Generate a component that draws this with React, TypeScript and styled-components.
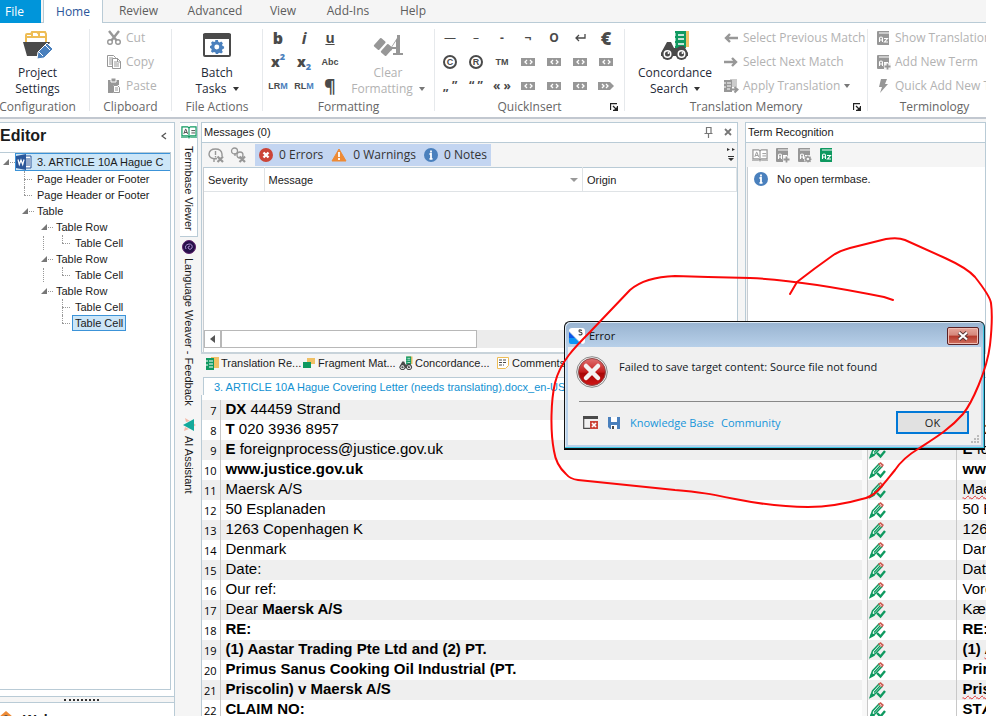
import React from "react";
import styled, { createGlobalStyle, css } from "styled-components";

const ui = `"Open Sans", "Noto Sans", sans-serif`;
const plain = `"Liberation Sans", Arial, sans-serif`;
const line = "#b9cbd6";
const ink = "#4a4a4a";
const faded = "#979797";
const green = "#0f9960";
const blue = "#4a80bd";

const Global = createGlobalStyle`
  * { box-sizing: border-box; }
  body { margin: 0; background: #fff; overflow: hidden; }
  button { font: inherit; color: inherit; background: none; border: 0; padding: 0; margin: 0; text-align: inherit; white-space: nowrap; }
  svg { display: block; flex: none; }
  ul { list-style: none; margin: 0; padding: 0; }
`;

const Page = styled.div`
  position: relative;
  height: 100vh;
  padding-right: 7px;
  overflow: hidden;
  font: 11px/16px ${plain};
  color: #1b1b1b;
`;
const AppWindow = styled.div`
  display: flex;
  flex-direction: column;
  height: 100%;
  overflow: hidden;
  background: #f5f5f5;
`;

/* ---------- ribbon ---------- */
const TabBar = styled.nav`
  display: flex;
  height: 23px;
  flex: none;
  font: 12px/22px ${ui};
  color: #5d5d5d;
  border-bottom: 1px solid ${line};
`;
const FileTab = styled.button`
  width: 41px;
  height: 23px;
  padding-left: 5px;
  margin-right: 2px;
  color: #fff;
  background: #0095da;
`;
const Tab = styled.button<{ $w: number; $active?: boolean }>`
  width: ${(p) => p.$w}px;
  text-align: center;
  ${(p) =>
    p.$active &&
    css`
      height: 23px;
      color: #2a5599;
      background: #fff;
      border: 1px solid ${line};
      border-width: 0 1px;
    `}
`;
const Ribbon = styled.div`
  display: flex;
  flex: none;
  height: 96px;
  margin-bottom: 3px;
  background: #fff;
  border-bottom: 2px solid #c2c8d0;
  font: 12px/16px ${ui};
  overflow: hidden;
`;
const Group = styled.section<{ $w: number }>`
  display: flex;
  flex-direction: column;
  flex: none;
  width: ${(p) => p.$w}px;
  margin: 6px 0;
  border-right: 1px solid #e6e9ec;
`;
const GroupBody = styled.div<{ $pad?: number; $gap?: number }>`
  display: flex;
  flex: none;
  height: 70px;
  padding-left: ${(p) => p.$pad || 0}px;
  gap: ${(p) => p.$gap || 0}px;
`;
const GroupLabel = styled.div<{ $left?: boolean }>`
  display: flex;
  flex: none;
  justify-content: center;
  padding-right: ${(p) => (p.$left ? 14 : 0)}px;
  line-height: 16px;
  color: #666;
  position: relative;
`;
const Launcher = styled.button`
  position: absolute;
  right: 6px;
  top: 4px;
`;
const Large = styled.button<{ $w: number; $off?: boolean }>`
  display: flex;
  flex-direction: column;
  align-items: center;
  width: ${(p) => p.$w}px;
  color: ${(p) => (p.$off ? "#b2b2b2" : "#1f2a38")};
  line-height: 16px;
  text-align: center;
`;
const LargeIcon = styled.span`
  display: flex;
  align-items: center;
  height: 36px;
  padding-bottom: 4px;
`;
const WithArrow = styled.span`
  display: inline-flex;
  align-items: center;
  gap: 6px;
`;
const SmallList = styled.div`
  display: flex;
  flex-direction: column;
`;
const Small = styled.button`
  display: flex;
  align-items: center;
  flex: none;
  gap: 4px;
  height: 24px;
  padding-bottom: 7px;
  color: #b2b2b2;
`;
const IconGrid = styled.div<{ $cols: number }>`
  display: grid;
  grid-template-columns: repeat(${(p) => p.$cols}, 26px);
  grid-auto-rows: 24px;
`;
const Cell = styled.button<{ $s?: number; $b?: number }>`
  display: flex;
  align-items: center;
  justify-content: center;
  height: 18px;
  color: ${ink};
  font-size: ${(p) => p.$s || 12}px;
  font-weight: ${(p) => p.$b || 700};
  line-height: 16px;
  sup, sub { font-size: 9px; line-height: 8px; color: ${blue}; }
  sup { align-self: flex-start; }
  sub { align-self: flex-end; }
`;
const Tight = styled.span`
  font: bold 9px/16px ${plain};
  em { font-style: normal; color: ${blue}; }
`;
const Ring = styled.span`
  width: 14px;
  height: 14px;
  border: 2px solid ${ink};
  border-radius: 50%;
  font: bold 9px/10px ${plain};
  text-align: center;
`;

/* ---------- workspace ---------- */
const Work = styled.div`
  display: flex;
  flex: 1;
  min-height: 0;
`;
const Side = styled.aside`
  display: flex;
  flex-direction: column;
  width: 175px;
  flex: none;
  border-right: 1px solid ${line};
`;
const SidePanel = styled.div`
  display: flex;
  flex-direction: column;
  flex: 1;
  min-height: 0;
  background: #fff;
  border-top: 1px solid ${line};
  border-bottom: 1px solid ${line};
`;
const SideTitle = styled.header`
  display: flex;
  align-items: center;
  justify-content: space-between;
  height: 29px;
  padding: 0 7px 3px 0;
  font: bold 16px/20px ${plain};
`;
const Tree = styled.div`
  flex: 1;
  margin: 0 3px 6px 0;
  border: 1px solid ${line};
  border-left: 0;
  overflow: hidden;
`;
const Node = styled.li<{ $x: number; $root?: boolean }>`
  display: flex;
  align-items: center;
  height: ${(p) => (p.$root ? 18 : 16)}px;
  padding-left: ${(p) => p.$x}px;
  white-space: nowrap;
`;
const NodeText = styled.span<{ $sel?: boolean }>`
  line-height: 14px;
  padding: 0 2px;
  border: 1px solid transparent;
  ${(p) =>
    p.$sel &&
    css`
      background: #cce6f8;
      border-color: #3c93d8;
    `}
`;
const RootText = styled.span`
  display: flex;
  align-items: center;
  gap: 5px;
  flex: 1;
  height: 18px;
  padding-bottom: 1px;
  background: #cce6f8;
  border: 1px solid #3c93d8;
  border-right: 0;
`;
const Guide = styled.span<{ $tail?: boolean }>`
  position: relative;
  width: 8px;
  height: 16px;
  margin-right: 2px;
  &::before {
    content: "";
    position: absolute;
    inset: 8px 0 0 0;
    border-top: 1px dotted #999;
  }
  &::after {
    content: "";
    position: absolute;
    inset: 0 0 ${(p) => (p.$tail ? 0 : 8)}px 0;
    border-left: 1px dotted #999;
  }
`;
const OuterGuide = styled.span`
  width: 19px;
  height: 14px;
  border-left: 1px dotted #999;
`;
const Dots = styled.span`
  width: 5px;
  margin: 0 0 0 1px;
  border-top: 1px dotted #999;
`;
const Splitter = styled.div`
  display: flex;
  justify-content: center;
  align-items: center;
  height: 5px;
  padding-right: 11px;
`;
const Grip = styled.span`
  width: 35px;
  border-top: 2px dotted #333;
`;
const SideFoot = styled.div`
  display: flex;
  gap: 10px;
  height: 14px;
  overflow: hidden;
  padding-top: 8px;
  background: #fff;
  border-top: 1px solid ${line};
  font: bold 14px/18px ${plain};
`;

const Rail = styled.div`
  display: flex;
  flex-direction: column;
  width: 26px;
  flex: none;
  padding: 0 2px 0 5px;
`;
const RailTab = styled.button<{ $h: number; $active?: boolean }>`
  display: flex;
  flex-direction: column;
  align-items: center;
  width: 18px;
  height: ${(p) => p.$h}px;
  padding-top: ${(p) => (p.$active ? 2 : 3)}px;
  gap: ${(p) => (p.$active ? 7 : 4)}px;
  ${(p) =>
    p.$active &&
    css`
      background: #fff;
      border: 1px solid ${line};
      border-left: 0;
    `}
`;
const Vert = styled.span`
  writing-mode: vertical-rl;
  line-height: 16px;
`;

const Main = styled.div`
  display: flex;
  flex-direction: column;
  flex: 1;
  min-width: 0;
`;
const Docks = styled.div`
  display: flex;
  height: 230px;
  gap: 7px;
  flex: none;
`;
const Dock = styled.section<{ $w?: number }>`
  display: flex;
  flex-direction: column;
  ${(p) => (p.$w ? `width: ${p.$w}px; flex: none;` : "flex: 1;")}
  min-width: 0;
  border: 1px solid ${line};
  border-bottom: 0;
`;
const DockTitle = styled.header`
  display: flex;
  align-items: center;
  height: 20px;
  padding: 0 5px 1px 2px;
  gap: 11px;
  background: #fff;
  border-bottom: 1px solid ${line};
  h2 { flex: 1; margin: 0; font: inherit; line-height: 18px; }
`;
const DockTools = styled.div`
  display: flex;
  align-items: center;
  gap: 6px;
  height: 24px;
  padding: 0 2px 0 6px;
`;
const Filters = styled.div`
  display: flex;
  align-items: center;
  gap: 8px;
  height: 22px;
  padding: 0 4px;
  margin: 0 auto 0 3px;
  background: #c3d5f1;
  font: 12px/16px ${ui};
  color: #333;
  button { display: flex; align-items: center; gap: 6px; }
`;
const Canvas = styled.div`
  display: flex;
  flex-direction: column;
  flex: 1;
  margin-left: 1px;
  background: #fff;
  border-left: 1px solid #c8cdd2;
`;
const MsgTable = styled.table`
  width: 100%;
  border-collapse: collapse;
  table-layout: fixed;
  border-top: 1px solid ${line};
  th {
    height: 24px;
    padding: 0 4px;
    text-align: left;
    font-weight: 400;
    border-bottom: 1px solid #dfe3e6;
    border-right: 1px solid #dfe3e6;
  }
`;
const SortHead = styled.span`
  display: flex;
  align-items: center;
  justify-content: space-between;
`;
const Scroll = styled.div`
  display: flex;
  height: 18px;
  margin: auto 0 4px;
  background: #ececec;
`;
const ScrollArrow = styled.button`
  display: flex;
  align-items: center;
  justify-content: center;
  width: 17px;
  background: #fff;
  border: 1px solid #b8b8b8;
`;
const ScrollThumb = styled.span`
  width: 48%;
  background: #fff;
  border: 1px solid #b8b8b8;
`;
const Empty = styled.p`
  display: flex;
  align-items: center;
  gap: 9px;
  margin: 4px 0 0 6px;
`;
const DockTabs = styled.div`
  display: flex;
  align-items: center;
  height: 22px;
  flex: none;
  padding: 0 0 3px 4px;
  border-top: 2px solid #c8d3da;
`;
const DockTab = styled.button`
  display: flex;
  align-items: center;
  gap: 2px;
  width: 97px;
`;
const DocTabs = styled.div`
  display: flex;
  height: 18px;
  flex: none;
  margin: 3px 0 0 2px;
  background: #fff;
  border-top: 1px solid ${line};
  border-left: 1px solid ${line};
`;
const DocTab = styled.button`
  padding-left: 10px;
  color: #1191d2;
`;
const Sheet = styled.div`
  flex: 1;
  min-height: 0;
  overflow: hidden;
  padding-top: 5px;
  background: #fff;
  border-left: 1px solid ${line};
`;
const Segments = styled.table`
  width: 100%;
  border-collapse: collapse;
  table-layout: fixed;
  font: 15px/20px ${plain};
  color: #000;
  td, th {
    height: 20px;
    padding: 0;
    overflow: hidden;
    white-space: nowrap;
  }
  tr:nth-child(odd) > * { background: #efefef; }
  tr > td:nth-child(3) { background: #f8f8f8; }
`;
const Num = styled.th`
  text-align: right;
  font: 11px/18px ${ui};
  border-right: 1px solid #c8c8c8;
  && { padding: 2px 3px 0 0; }
`;
const Source = styled.td`
  && { padding-left: 5px; padding-bottom: 2px; line-height: 18px; }
`;
const Status = styled.td`
  border-left: 1px solid #c8c8c8;
  && { padding-left: 1px; }
`;
const Target = styled.td`
  border-left: 1px solid #c8c8c8;
  && { padding-left: 6px; padding-bottom: 2px; line-height: 18px; }
`;
const Wavy = styled.span`
  text-decoration: underline wavy #e03030 1px;
  text-underline-offset: 1px;
`;

/* ---------- error dialog ---------- */
const Dialog = styled.section`
  position: absolute;
  left: 564px;
  top: 321px;
  width: 421px;
  padding: 0 3px 3px;
  border: 1px solid #111;
  border-right-color: #11384a;
  border-radius: 6px 6px 0 0;
  background: linear-gradient(#98b3d0, #b9d1ea 26px);
  box-shadow: inset -1px -1px 0 #3fc8e4, inset 1px 1px 0 #dce9f5, 0 1px 0 #000;
  font: 11px/16px ${ui};
`;
const DialogTitle = styled.header`
  display: flex;
  align-items: center;
  height: 25px;
  gap: 4px;
  padding: 3px 2px 0 1px;
  h2 { flex: 1; margin: 0; font: inherit; color: #111; }
`;
const DialogClose = styled.button`
  display: flex;
  align-items: center;
  justify-content: center;
  width: 32px;
  height: 18px;
  border: 1px solid #5a2226;
  border-radius: 2px;
  background: linear-gradient(#e6a69b 0, #d5877a 45%, #b5382a 50%, #cf7060 100%);
  box-shadow: inset 0 0 0 1px #f0bdb3;
`;
const DialogBody = styled.div`
  background: #f0f0f0;
  padding: 9px 12px 11px 8px;
`;
const DialogText = styled.div`
  display: flex;
  gap: 11px;
  height: 45px;
  color: #10181f;
  p { margin: 3px 0 0; }
`;
const DialogFoot = styled.footer`
  display: flex;
  align-items: center;
  gap: 7px;
  margin-left: 3px;
  padding: 9px 0 0 4px;
  border-top: 1px solid #888;
  a { color: #1595da; text-decoration: none; }
`;
const FootIcon = styled.button`
  margin-right: 3px;
`;
const Ok = styled.button`
  width: 73px;
  height: 23px;
  margin-left: auto;
  text-align: center;
  color: #222;
  border: 2px solid #0078d7;
  background: #e1e1e1;
`;
const Resize = styled.svg`
  position: absolute;
  right: 5px;
  bottom: 5px;
`;
const Ink = styled.svg`
  position: absolute;
  left: 0;
  top: 0;
  pointer-events: none;
`;

/* ---------- icons ---------- */
type SvgProps = { w?: number; h?: number; box?: string; children: React.ReactNode };
const Svg = ({ w = 16, h = 16, box, children }: SvgProps) => (
  <svg width={w} height={h} viewBox={box || `0 0 ${w} ${h}`} aria-hidden="true">{children}</svg>
);
const Down = ({ c = "#333" }: { c?: string }) => <Svg w={6} h={4}><path d="M0 0h6L3 4z" fill={c} /></Svg>;
const ProjectIcon = () => (
  <Svg w={32} h={28}>
    <path d="M4 12V4q0-1 1-1h4l1-2h5l1 1 1-1h6l1 2v9" fill="#fff" stroke="#eebd55" strokeWidth="2" />
    <path d="M5 6h19M10 2v3M17 2v3" stroke="#eebd55" strokeWidth="2" />
    <path d="M1 11h27l-2 5-9 9H5z" fill={ink} />
    <path d="M15 28l1-7 9-9 6 6-9 9z" fill={blue} stroke="#fff" />
    <path d="M23 14l5 5M17 21l4 4" stroke="#fff" />
  </Svg>
);
const gear = "M6 0h3l.4 2 1.6.7L12.8 1.600l1.900 2.100-1 1.700.6 1.500 1.700.4v2.400l-1.700.5-.7 1.600 1 1.700-1.900 1.900-1.700-1-1.500.6L9 16H6.600l-.5-1.800-1.600-.6-1.700 1L1 12.800l1-1.700L1.300 9.600 0 9.200V6.800l1.500-.5.6-1.500-1-1.700L3 1.300l1.600 1L6 1.800z";
const BatchIcon = () => (
  <Svg w={28} h={26}>
    <rect x="1" y="2" width="26" height="22" rx="1" fill="#fff" stroke={ink} strokeWidth="2" />
    <path d="M0 2h28v5H0z" fill={ink} />
    <g transform="translate(7 8) scale(.88)"><path d={gear} fill={blue} /><circle cx="7.700" cy="8" r="2.800" fill="#fff" /></g>
  </Svg>
);
const CutIcon = () => (
  <Svg>
    <path d="M3 1l8 10M13 1L5 11" stroke={faded} strokeWidth="2.400" />
    <circle cx="4" cy="12" r="2.300" fill="#fff" stroke={faded} strokeWidth="1.400" />
    <circle cx="12" cy="12" r="2.300" fill="#fff" stroke={faded} strokeWidth="1.400" />
  </Svg>
);
const CopyIcon = () => (
  <Svg>
    <path d="M1.500 1.500h6l2 2v9h-8z" fill="#fff" stroke={faded} /><path d="M3 4h4M3 6h3M3 8h3M3 10h3" stroke={faded} />
    <path d="M6.500 4.500h5l3 3v7h-8z" fill="#fff" stroke={faded} /><path d="M11.500 4v4H15M8 8h3M8 10h5M8 12h5" fill="none" stroke={faded} />
  </Svg>
);
const PasteIcon = () => (
  <Svg>
    <path d="M2 2h11v5H7v8H2z" fill={faded} /><path d="M5 0h5v4H5z" fill={faded} stroke="#fff" />
    <path d="M7.500 7.500h4l2 2v5h-6z" fill="#fff" stroke={faded} /><path d="M9 10h3M9 12h3" stroke={faded} />
  </Svg>
);
const ClearIcon = () => (
  <Svg w={32} h={26}>
    <g fill={faded}>
      <rect x="2" y="9" width="11" height="7" rx="1" transform="rotate(-48 7 12)" />
      <rect x="9" y="15" width="11" height="7" rx="1" transform="rotate(-48 14 18)" />
      <path d="M25 3h3v18h3v2h-10v-2h3v-4h-4l-1 2-1-2L25 6zM20 15h4V9z" />
    </g>
  </Svg>
);
const TagIcon = ({ last }: { last?: boolean }) => (
  <Svg w={16} h={8}>
    <path d={last ? "M0 0h12l4 4-4 4H0z" : "M1 0h14v8H1z"} fill={faded} />
    <path d={last ? "M4 2l2 2-2 2M8 2l2 2-2 2" : "M7 2L5 4l2 2M10 2l2 2-2 2"} fill="none" stroke="#fff" strokeWidth="1.300" />
  </Svg>
);
const ConcIcon = ({ s = 30 }: { s?: number }) => (
  <Svg w={s} h={s} box="0 0 30 30">
    <path d="M18 1h11v16H18z" fill="#f0c165" /><path d="M15 1h11v17H15z" fill={green} />
    <path d="M14 3v3M14 8v3M14 13v3" stroke="#fff" strokeWidth="3" /><path d="M18 5h6M18 9h6M18 14h6" stroke="#fff" strokeWidth="1.500" />
    <path d="M1 23l6-11h4l3 6h3l3-2h4l4 7v3H1z" fill={ink} />
    {[7.5, 21.5].map((x) => <g key={x}><circle cx={x} cy="24" r="6" fill={ink} /><circle cx={x} cy="24" r="4" fill="#fff" /><circle cx={x} cy="24" r="2.500" fill={ink} /><circle cx={x + 1} cy="23" r="1" fill="#fff" /></g>)}
  </Svg>
);
const ArrowIcon = ({ right }: { right?: boolean }) => (
  <Svg><path d={right ? "M1 8h12M9 4l4 4-4 4" : "M15 8H3M7 4L3 8l4 4"} fill="none" stroke={faded} strokeWidth="2.400" /></Svg>
);
const ApplyIcon = () => (
  <Svg>
    <path d="M7 1h7v8H7z" fill="#ccc" /><path d="M1 2h8v12H1z" fill={faded} />
    <path d="M1 5h2M1 9h2M4 5h4M4 8h4M4 11h3" stroke="#fff" /><path d="M7 11.500h7M11.500 9l3 2.500-3 3" stroke={faded} strokeWidth="2" fill="none" />
  </Svg>
);
const BookIcon = ({ c = faded, extra }: { c?: string; extra?: "plus" | "gear" }) => (
  <Svg>
    <path d="M2 2q0-1 1-1h11v1.500H4v1h10V15H3q-1 0-1-1z" fill={c} />
    <path d="M4.500 12V8.500q0-1.500 1.500-1.500t1.500 1.500V12M4.500 10h3M9 8.500h3.500L9.500 12H13" fill="none" stroke="#fff" strokeWidth="1.100" />
    {extra === "plus" && <g><path d="M9 9h7v7H9z" fill="#f5f5f5" /><path d="M12.500 9.500v6M9.500 12.500h6" stroke={c} strokeWidth="1.800" /></g>}
    {extra === "gear" && <g><circle cx="12" cy="12" r="4" fill="#f5f5f5" /><g transform="translate(8.500 8.500) scale(.44)"><path d={gear} fill={c} /><circle cx="7.700" cy="8" r="3" fill="#f5f5f5" /></g></g>}
  </Svg>
);
const OpenBook = ({ c }: { c: string }) => (
  <Svg w={16} h={14} box="0 0 17 14">
    <path d="M1 1.500h6l1.500 1L10 1.500h6V11h-6l-1.500 1L7 11H1z" fill="#fff" stroke={c} strokeWidth="1.300" />
    <path d="M8.500 2v10" stroke={c} strokeWidth="1.200" /><path d="M0 12.500h7l1.500 1 1.500-1h7" fill="none" stroke={c} />
    <path d="M3 9l1.800-5h.4L7 9M3.500 7.500h3M11 5.500h4M11 8h4" fill="none" stroke={c === green ? ink : c} />
  </Svg>
);
const BoltIcon = () => <Svg><path d="M6 1h6l-2 5h3L5 15l2-6H4z" fill={faded} /></Svg>;
const LauncherIcon = () => <Svg w={8} h={8}><path d="M7 .5H.5V7M7.500 3v4.500H3M3 3l3.500 3.500" fill="none" stroke="#222" strokeWidth="1.300" /><path d="M7 4v3H4z" fill="#222" /></Svg>;
const Expander = () => <Svg w={6} h={6}><path d="M6 0v6H0z" fill="#777" /></Svg>;
const WordIcon = () => (
  <Svg>
    <path d="M8 2h7v12H8z" fill="#fff" stroke="#2b579a" /><path d="M10 5h4M10 7h4M10 9h4M10 11h4" stroke="#2b579a" />
    <path d="M0 2l10-2v16L0 14z" fill="#2b579a" /><path d="M2 5.500l1.300 5L5 6l1.700 4.500 1.300-5" fill="none" stroke="#fff" strokeWidth="1.200" />
  </Svg>
);
const InfoIcon = () => <Svg w={14} h={14}><circle cx="7" cy="7" r="7" fill={blue} /><path d="M7 2.500v2M5.500 6H7v4.500M5.500 10.800h3" stroke="#fff" strokeWidth="1.800" fill="none" /></Svg>;
const ErrIcon = () => <Svg w={14} h={14}><circle cx="7" cy="7" r="7" fill="#cb4437" /><path d="M4.500 4.500l5 5M9.500 4.500l-5 5" stroke="#fff" strokeWidth="2.400" /></Svg>;
const WarnIcon = () => <Svg><path d="M8 2l7 12H1z" fill="#ee8a35" stroke="#ee8a35" strokeLinejoin="round" /><path d="M8 5v5M8 11v2" stroke="#fff" strokeWidth="1.800" /></Svg>;
const BubbleIcon = ({ two }: { two?: boolean }) => (
  <Svg>
    {two ? <g fill="none" stroke={faded} strokeWidth="1.300"><circle cx="4.500" cy="4" r="3" /><path d="M5 6v3" /><circle cx="10" cy="8" r="3" /></g>
      : <g fill="none" stroke={faded} strokeWidth="1.400"><path d="M9 11.500q-2 .5-4 0-4-1-4-4.500Q1.500 2 7.500 2T14 7v2M6 12v3" /><path d="M7.500 4v4M7.500 9v1.500" /></g>}
    <path d="M9.500 9.500l5.500 5.500M15 9.500L9.500 15" stroke={faded} strokeWidth="2.200" />
  </Svg>
);
const WeaverIcon = () => <Svg w={14} h={14}><circle cx="7" cy="7" r="6.500" fill="#26104a" stroke="#60206d" /><path d="M4 9q-2-4 3-5 4 0 3 4-2 3-4 0 0-2 2-2" fill="none" stroke="#a98bd0" /></Svg>;
const AssistIcon = () => <Svg w={14} h={14}><path d="M4 4L3 0l5 3M3 9l-1 4 5-2M11 5l3 2-3 2" fill="#f3b9a8" /><path d="M12 1v12L1 7z" fill="#13a99b" /></Svg>;
const PinIcon = () => <Svg w={9} h={11}><path d="M2 .5h5v6M2.500 0v6M.5 6.500h8M4.500 7v4" fill="none" stroke="#777" strokeWidth="1.200" /></Svg>;
const CloseIcon = () => <Svg w={8} h={8}><path d="M1 1l6 6M7 1L1 7" stroke="#777" strokeWidth="1.800" /></Svg>;
const MoreIcon = () => <Svg w={8} h={14}><path d="M0 0l3 1.500L0 3zM5 0l3 1.500L5 3zM1 10h6l-3 3z" fill="#333" /><path d="M1 8.500h6" stroke="#333" /></Svg>;
const MemIcon = () => <Svg w={14} h={14}><path d="M6 1h8v11H6z" fill="#f0c165" /><path d="M1 2h8v12H1z" fill={green} /><path d="M0 5h3M0 9h3M4 5h4M4 8h4M4 11h4" stroke="#fff" /></Svg>;
const FragIcon = () => <Svg w={14} h={14}><path d="M5 2h8v6H5z" fill="#f0c165" /><path d="M1 6h8v6H1z" fill={green} /></Svg>;
const NoteIcon = () => <Svg w={14} h={14}><path d="M1.500 1.500h11v8l-3 3h-8z" fill="#fff" stroke="#eebd55" /><path d="M3 4h8M3 6.500h8M3 9h5" stroke={ink} strokeDasharray="3 1" /></Svg>;
const EditIcon = () => (
  <Svg w={18} h={17}>
    <path d="M2 14l1.500-5 6.500-7 3 2.500-7 7.500z" fill="#fff" stroke={green} strokeWidth="1.500" />
    <path d="M1 15.500l1.500-4 2.500 2zM5 10.500L11 4" fill={green} stroke={green} strokeWidth="1.200" />
    <path d="M9 2l2.500-2 3.500 3-2 2.500z" fill="#cf5d55" />
    <path d="M11 2.500l1.500 1" stroke="#fff" />
    <path d="M8 11l3.500 3.500L16 9" fill="none" stroke={green} strokeWidth="2.400" />
  </Svg>
);
const LogoIcon = () => (
  <Svg><path d="M3 0h10q3 0 3 3v10q0 3-3 3L0 3q0-3 3-3z" fill="#fff" /><path d="M0 4l6 6H0z" fill="#0a55e8" /><path d="M0 10h6l6 6H2q-2 0-2-2z" fill="#0a94f5" />
    <path d="M13 2.500q-3-1.500-3 .5 0 1 1.500 1.300 1.800.4 1.500 1.700-.5 1.500-3.300.4" fill="none" stroke="#444" strokeWidth="1.100" /></Svg>
);
const BigError = () => (
  <Svg w={32} h={32}>
    <defs><linearGradient id="red" x2="0" y2="1"><stop stopColor="#e07070" /><stop offset=".5" stopColor="#c51d1d" /><stop offset=".55" stopColor="#a80808" /><stop offset="1" stopColor="#d01515" /></linearGradient></defs>
    <circle cx="16" cy="16" r="15.300" fill="#eee" stroke="#888" /><circle cx="16" cy="16" r="13.500" fill="url(#red)" stroke="#8e4a4a" />
    <path d="M10 10l12 12M22 10L10 22" stroke="#f3f3f3" strokeWidth="4.500" strokeLinecap="round" />
  </Svg>
);
const WinErrIcon = () => <Svg w={15} h={14}><path d="M.7 1v11.300H7" fill="none" stroke={ink} strokeWidth="1.200" /><path d="M0 0h15v3H0z" fill={ink} /><path d="M7 5h8v8H7z" fill="#cb4437" /><path d="M9 7l4 4M13 7l-4 4" stroke="#fff" strokeWidth="1.700" /></Svg>;
const SaveIcon = () => <Svg w={12} h={12}><path d="M0 0h12v12H2l-2-2z" fill={blue} /><path d="M3 0h6v5H3zM3 8h6v4H3z" fill="#fff" /><path d="M4 9h2v3H4z" fill={ink} /></Svg>;

/* ---------- data ---------- */
const tabs: [string, number, boolean?][] = [["Home", 60, true], ["Review", 71], ["Advanced", 82], ["View", 54], ["Add-Ins", 76], ["Help", 54]];
type Row = [number, React.ReactNode, React.ReactNode];
const rows: Row[] = [
  [7, <><b>DX</b> 44459 Strand</>, <b>DX</b>],
  [8, <><b>T</b> 020 3936 8957</>, <><b>T</b> 020</>],
  [9, <><b>E</b> foreignprocess@justice.gov.uk</>, <><b>E</b> foreign</>],
  [10, <b>www.justice.gov.uk</b>, <b>www.justice</b>],
  [11, "Maersk A/S", <Wavy>Maersk</Wavy>],
  [12, "50 Esplanaden", "50 Esplanaden"],
  [13, "1263 Copenhagen K", "1263"],
  [14, "Denmark", "Danmark"],
  [15, "Date:", "Dato:"],
  [16, "Our ref:", "Vores"],
  [17, <>Dear <b>Maersk A/S</b></>, "Kære"],
  [18, <b>RE:</b>, <b>RE:</b>],
  [19, <b>(1) Aastar Trading Pte Ltd and (2) PT.</b>, <b>(1) <Wavy>Aastar</Wavy></b>],
  [20, <b>Primus Sanus Cooking Oil Industrial (PT.</b>, <b>Primus</b>],
  [21, <b>Priscolin) v Maersk A/S</b>, <b><Wavy>Priscolin</Wavy></b>],
  [22, <b>CLAIM NO:</b>, <b>STÆVNING</b>],
];

const Leaf = ({ children, sel, outer, tail }: { children: string; sel?: boolean; outer?: boolean; tail?: boolean }) => (
  <Node $x={outer ? 43 : 62}>{outer && <OuterGuide />}<Guide $tail={tail} /><NodeText $sel={sel}>{children}</NodeText></Node>
);
const TableRowNode = () => <Node $x={41}><Expander /><Dots /><NodeText>Table Row</NodeText></Node>;

export default function App() {
  return (
    <Page>
      <Global />
      <AppWindow>
        <TabBar>
          <FileTab>File</FileTab>
          {tabs.map(([t, w, a]) => <Tab key={t} $w={w} $active={a}>{t}</Tab>)}
        </TabBar>
        <Ribbon>
          <Group $w={90}>
            <GroupBody><Large $w={75}><LargeIcon><ProjectIcon /></LargeIcon>Project<br />Settings</Large></GroupBody>
            <GroupLabel $left>Configuration</GroupLabel>
          </Group>
          <Group $w={82}>
            <GroupBody $pad={16}>
              <SmallList>
                <Small><CutIcon />Cut</Small><Small><CopyIcon />Copy</Small><Small><PasteIcon />Paste</Small>
              </SmallList>
            </GroupBody>
            <GroupLabel>Clipboard</GroupLabel>
          </Group>
          <Group $w={91}>
            <GroupBody><Large $w={90}><LargeIcon><BatchIcon /></LargeIcon>Batch<WithArrow>Tasks <Down /></WithArrow></Large></GroupBody>
            <GroupLabel>File Actions</GroupLabel>
          </Group>
          <Group $w={172}>
            <GroupBody $pad={2}>
              <IconGrid $cols={3}>
                <Cell $s={16} $b={800}>b</Cell>
                <Cell $s={16}><i>i</i></Cell>
                <Cell $s={14}><u>u</u></Cell>
                <Cell $s={14} $b={800}>x<sup>2</sup></Cell>
                <Cell $s={14} $b={800}>x<sub>2</sub></Cell>
                <Cell><Tight>Abc</Tight></Cell>
                <Cell><Tight>LR<em>M</em></Tight></Cell>
                <Cell><Tight>RL<em>M</em></Tight></Cell>
                <Cell $s={18}>¶</Cell>
              </IconGrid>
              <Large $w={90} $off><LargeIcon><ClearIcon /></LargeIcon>Clear<WithArrow>Formatting <Down c="#777" /></WithArrow></Large>
            </GroupBody>
            <GroupLabel>Formatting</GroupLabel>
          </Group>
          <Group $w={190}>
            <GroupBody $pad={2}>
              <IconGrid $cols={7}>
                <Cell $b={400}>—</Cell><Cell $b={400}>–</Cell><Cell>-</Cell><Cell>¬</Cell><Cell>O</Cell>
                <Cell aria-label="Line break"><Svg w={12} h={10}><path d="M11 1v4H2M5 2L2 5l3 3" fill="none" stroke={ink} strokeWidth="1.300" /></Svg></Cell>
                <Cell $s={18} $b={800}>€</Cell>
                <Cell aria-label="Copyright sign"><Ring>C</Ring></Cell><Cell aria-label="Registered sign"><Ring>R</Ring></Cell><Cell><Tight>TM</Tight></Cell>
                <Cell><TagIcon /></Cell><Cell><TagIcon /></Cell><Cell><TagIcon /></Cell><Cell><TagIcon /></Cell>
                <Cell>„ ”</Cell><Cell>“ ”</Cell><Cell>« »</Cell>
                <Cell><TagIcon /></Cell><Cell><TagIcon /></Cell><Cell><TagIcon /></Cell><Cell><TagIcon last /></Cell>
              </IconGrid>
            </GroupBody>
            <GroupLabel>QuickInsert<Launcher aria-label="QuickInsert options"><LauncherIcon /></Launcher></GroupLabel>
          </Group>
          <Group $w={243}>
            <GroupBody $pad={5} $gap={3}>
              <Large $w={90}><LargeIcon><ConcIcon /></LargeIcon>Concordance<WithArrow>Search <Down /></WithArrow></Large>
              <SmallList>
                <Small><ArrowIcon />Select Previous Match</Small>
                <Small><ArrowIcon right />Select Next Match</Small>
                <Small><ApplyIcon />Apply Translation <Down c="#777" /></Small>
              </SmallList>
            </GroupBody>
            <GroupLabel>Translation Memory<Launcher aria-label="Translation Memory options"><LauncherIcon /></Launcher></GroupLabel>
          </Group>
          <Group $w={134}>
            <GroupBody $pad={7}>
              <SmallList>
                <Small><BookIcon />Show Translations</Small>
                <Small><BookIcon extra="plus" />Add New Term</Small>
                <Small><BoltIcon />Quick Add New Term</Small>
              </SmallList>
            </GroupBody>
            <GroupLabel>Terminology</GroupLabel>
          </Group>
        </Ribbon>

        <Work>
          <Side>
            <SidePanel>
              <SideTitle>Editor<button aria-label="Collapse"><Svg w={6} h={8}><path d="M5 1L1 4l4 3" fill="none" stroke="#555" strokeWidth="1.300" /></Svg></button></SideTitle>
              <Tree>
                <ul>
                  <Node $x={3} $root><Expander /><Dots /><RootText><WordIcon />3. ARTICLE 10A Hague C</RootText></Node>
                  <Node $x={24}><Guide $tail /><NodeText>Page Header or Footer</NodeText></Node>
                  <Node $x={24}><Guide /><NodeText>Page Header or Footer</NodeText></Node>
                  <Node $x={22}><Expander /><Dots /><NodeText>Table</NodeText></Node>
                  <TableRowNode />
                  <Leaf outer>Table Cell</Leaf>
                  <TableRowNode />
                  <Leaf outer>Table Cell</Leaf>
                  <TableRowNode />
                  <Leaf tail>Table Cell</Leaf>
                  <Leaf sel>Table Cell</Leaf>
                </ul>
              </Tree>
            </SidePanel>
            <Splitter><Grip /></Splitter>
            <SideFoot><Svg w={13} h={13}><path d="M6 0l7 6-7 7-7-7z" fill="#ee8a35" /><circle cx="6" cy="6" r="2" fill="#555" /></Svg>Welcome</SideFoot>
          </Side>

          <Rail>
            <RailTab $h={115} $active><OpenBook c={green} /><Vert>Termbase Viewer</Vert></RailTab>
            <RailTab $h={178}><WeaverIcon /><Vert>Language Weaver - Feedback</Vert></RailTab>
            <RailTab $h={90}><AssistIcon /><Vert>AI Assistant</Vert></RailTab>
          </Rail>

          <Main>
            <Docks>
              <Dock $w={537}>
                <DockTitle><h2>Messages (0)</h2><button aria-label="Pin"><PinIcon /></button><button aria-label="Close"><CloseIcon /></button></DockTitle>
                <DockTools>
                  <button aria-label="Clear message"><BubbleIcon /></button>
                  <button aria-label="Clear all messages"><BubbleIcon two /></button>
                  <Filters>
                    <button><ErrIcon />0 Errors</button>
                    <button><WarnIcon />0 Warnings</button>
                    <button><InfoIcon />0 Notes</button>
                  </Filters>
                  <button aria-label="More"><MoreIcon /></button>
                </DockTools>
                <Canvas>
                  <MsgTable>
                    <colgroup><col width="60" /><col /><col width="154" /></colgroup>
                    <thead><tr><th>Severity</th><th><SortHead>Message<Svg w={8} h={4}><path d="M0 0h8L4 4z" fill="#999" /></Svg></SortHead></th><th>Origin</th></tr></thead>
                  </MsgTable>
                  <Scroll><ScrollArrow aria-label="Scroll left"><Svg w={5} h={8}><path d="M5 0v8L0 4z" fill="#555" /></Svg></ScrollArrow><ScrollThumb /></Scroll>
                </Canvas>
              </Dock>
              <Dock>
                <DockTitle><h2>Term Recognition</h2></DockTitle>
                <DockTools>
                  <button aria-label="View term"><OpenBook c={faded} /></button>
                  <button aria-label="Add term"><BookIcon extra="plus" /></button>
                  <button aria-label="Term settings"><BookIcon extra="gear" /></button>
                  <button aria-label="Termbase"><BookIcon c={green} /></button>
                </DockTools>
                <Canvas><Empty><InfoIcon />No open termbase.</Empty></Canvas>
              </Dock>
            </Docks>
            <DockTabs>
              <DockTab><MemIcon />Translation Re...</DockTab>
              <DockTab><FragIcon />Fragment Mat...</DockTab>
              <DockTab><ConcIcon s={14} />Concordance...</DockTab>
              <DockTab><NoteIcon />Comments</DockTab>
            </DockTabs>
            <DocTabs><DocTab>3. ARTICLE 10A Hague Covering Letter (needs translating).docx_en-US</DocTab></DocTabs>
            <Sheet>
              <Segments>
                <colgroup><col width="18" /><col /><col width="5" /><col width="89" /><col width="30" /></colgroup>
                <tbody>
                  {rows.map(([n, s, t]) => (
                    <tr key={n}><Num scope="row">{n}</Num><Source>{s}</Source><td /><Status><EditIcon /></Status><Target>{t}</Target></tr>
                  ))}
                </tbody>
              </Segments>
            </Sheet>
          </Main>
        </Work>
      </AppWindow>

      <Dialog role="dialog" aria-labelledby="error-title">
        <DialogTitle><LogoIcon /><h2 id="error-title">Error</h2>
          <DialogClose aria-label="Close"><Svg w={12} h={10}><path d="M2 1.500l8 7M10 1.500l-8 7" stroke="#553333" strokeWidth="4" /><path d="M2 1.500l8 7M10 1.500l-8 7" stroke="#fff" strokeWidth="2.200" /></Svg></DialogClose>
        </DialogTitle>
        <DialogBody>
          <DialogText><BigError /><p>Failed to save target content: Source file not found</p></DialogText>
          <DialogFoot>
            <FootIcon aria-label="Error details"><WinErrIcon /></FootIcon>
            <FootIcon aria-label="Save report"><SaveIcon /></FootIcon>
            <a href="#kb">Knowledge Base</a><a href="#community">Community</a>
            <Ok>OK</Ok>
          </DialogFoot>
        </DialogBody>
        <Resize width="8" height="8" viewBox="0 0 8 8"><path d="M6 0h2v2H6zM3 3h2v2H3zM6 3h2v2H6zM0 6h2v2H0zM3 6h2v2H3zM6 6h2v2H6z" fill="#bbb" /></Resize>
      </Dialog>

      <Ink width="993" height="716" viewBox="0 0 993 716" aria-hidden="true">
        <path
          d="M790 294L797 282Q815 268 832 256Q839 251 850 248L886 239Q898 237 905 240L945 258Q967 268 975 277Q990 296 991 303Q993 318 990 345C987 370 972 403 963 414C950 429 935 438 918 449Q903 458 895 470C882 486 876 495 866 498C845 504 825 507 808 507C780 507 755 503 735 499C710 494 700 492 675 490L578 480Q570 479 566 474Q556 465 554 451C550 430 551 400 555 383C560 362 575 347 590 332L630 290Q645 277 675 276L708 277L750 278C800 280 850 290 884 297L893 300"
          fill="none" stroke="#fb0808" strokeWidth="2" strokeLinecap="round" strokeLinejoin="round"
        />
      </Ink>
    </Page>
  );
}
